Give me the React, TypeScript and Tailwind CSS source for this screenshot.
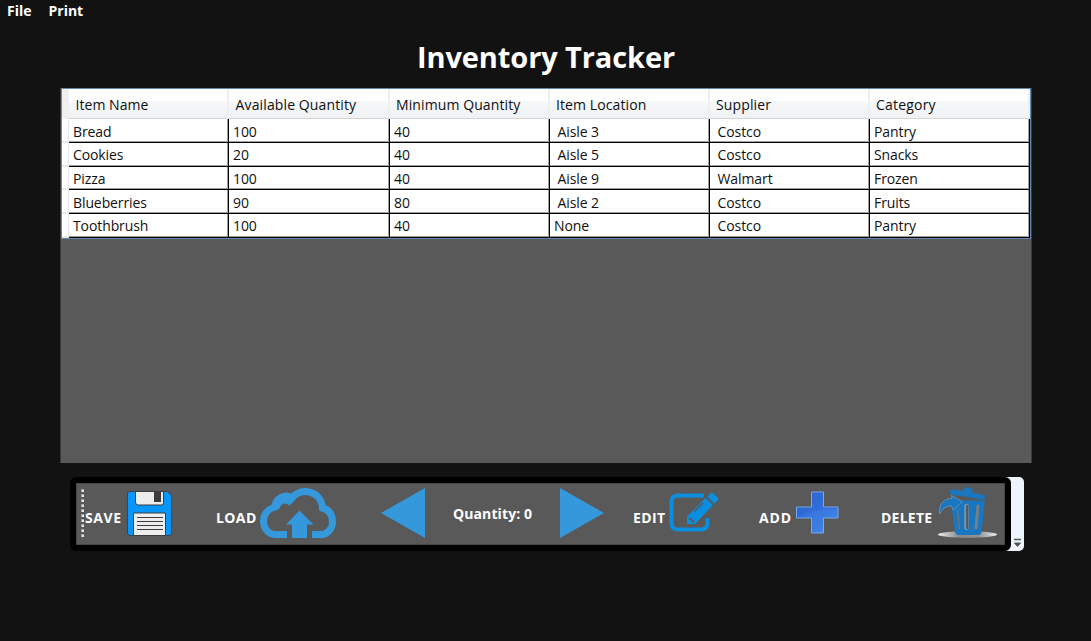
import type { ReactNode } from "react";

const columns = [
  { name: "Item Name", head: "tracking-[0.05px] ml-[0.5px]" },
  { name: "Available Quantity", head: "tracking-[0.12px] ml-[0.6px]" },
  { name: "Minimum Quantity", head: "tracking-[0.1px]" },
  { name: "Item Location", head: "tracking-[0.1px]" },
  { name: "Supplier", head: "tracking-[0.13px]" },
  { name: "Category", head: "tracking-[0.2px]" },
];

const rows = [
  { height: "h-6", text: "mt-[2px]", cells: ["Bread", "100", "40", " Aisle 3", " Costco", "Pantry"] },
  { height: "h-6", text: "", cells: ["Cookies", "20", "40", " Aisle 5", " Costco", "Snacks"] },
  { height: "h-[23px]", text: "mt-[2px]", cells: ["Pizza", "100", "40", " Aisle 9", " Walmart", "Frozen"] },
  { height: "h-6", text: "mt-[2px]", cells: ["Blueberries", "90", "80", " Aisle 2", " Costco", "Fruits"] },
  { height: "h-6", text: "", cells: ["Toothbrush", "100", "40", "None", " Costco", "Pantry"] },
];

const gridColumns = "grid grid-cols-[7px_160px_161px_160px_160px_160px_160px]";

function InventoryTable() {
  return (
    <section className="ml-[60px] h-[375px] w-[972px] border-x border-[#3a3a3a] bg-[#595959] text-[14px] text-[#101010]">
      <div className="h-[151px] w-[970px] border border-[#6488b0] bg-white">
        <div className={`${gridColumns} h-[30px]`}>
          <div className="bg-[#f0f0f0]" />
          {columns.map((c) => (
            <div
              key={c.name}
              className="flex items-center border-r-2 border-b border-r-[#edeff0] border-b-[#d5d5d5] bg-[linear-gradient(to_bottom,#ffffff_0%,#ffffff_40%,#f7f8fa_41%,#f0f1f3_100%)] pl-[6px]"
            >
              <span className={`${c.head} mt-[2px] leading-5 whitespace-pre`}>{c.name}</span>
            </div>
          ))}
        </div>
        {rows.map((r) => (
          <div key={r.cells[0]} className={`${gridColumns} ${r.height}`}>
            <div className="border-b-2 border-r border-[#e8e8ee] bg-white" />
            {r.cells.map((cell, i) => (
              <div
                key={i}
                className="flex items-center border-r border-b border-black pl-1 shadow-[inset_-1px_-1px_0_#a0a0a0]"
              >
                <span className={`${r.text} leading-5 tracking-[-0.1px] whitespace-pre`}>{cell}</span>
              </div>
            ))}
          </div>
        ))}
      </div>
    </section>
  );
}

function Tool({ label, className, children }: { label: string; className: string; children: ReactNode }) {
  return (
    <button className={`${className} flex shrink-0 items-start text-[14px] font-bold text-white`}>
      <span className="mt-[25px] shrink-0 leading-5 whitespace-nowrap">{label}</span>
      {children}
    </button>
  );
}

function SaveIcon() {
  return (
    <svg width="46" height="48" viewBox="0 0 46 48" className="absolute top-[7px] left-[42px]">
      <path d="M2.500 1.500H40.500L44.500 5.500V43Q44.500 45.500 42 45.500H3Q0.500 45.500 0.500 43V4Q0.500 1.500 2.500 1.500Z" fill="#0796fc" stroke="#3b444c" />
      <path d="M8.500 1.500H36.500V13Q36.500 15 34.500 15H11Q8.500 15 8.500 12Z" fill="#ededed" stroke="#3c3c3c" />
      <path d="M27 2H34V12H27Z" fill="#3c3c3c" />
      <path d="M6.500 23H38.500V45.500H6.500Z" fill="#ededed" stroke="#3c3c3c" />
      <path d="M10 27.500H36M10 31.500H36M10 35.500H36M10 39.500H36" stroke="#3c3c3c" />
    </svg>
  );
}

function CloudIcon() {
  return (
    <svg width="78" height="52" viewBox="0 0 78 52" className="absolute top-[5px] left-[44px]">
      <path
        d="M17 46.800C7 46.800 3.500 39 3.500 33C3.500 26 8 21 15 19C15 11 25 5 32 10C40 -1 61 2 62.500 20C70 22 72.500 27 72.500 34C72.500 41 67 46.800 60 46.800"
        fill="none"
        stroke="#3498db"
        strokeWidth="7"
      />
      <path d="M16.500 46.500H27M52 46.500H61" stroke="#3498db" strokeWidth="7" />
      <path d="M17 20Q19 13 25 13Q29 13 31 16" fill="none" stroke="#3498db" strokeWidth="5" />
      <path d="M39.500 22.500L53.500 36.500H47V50H32V36.500H26Z" fill="#3498db" />
    </svg>
  );
}

function EditIcon() {
  return (
    <svg width="50" height="42" viewBox="0 0 50 42" className="absolute top-[9px] left-[36px]">
      <path d="M34.500 4L33 3.500H9Q2.500 3.500 2.500 10V31Q2.500 37.500 9 37.500H32Q38.500 37.500 38.500 31V26" fill="none" stroke="#098ee0" strokeWidth="4" />
      <path d="M18 24.500L36.500 6L44 13L26 32H18Z" fill="#098ee0" />
      <path d="M38 5L42 1Q43 0 45 2L49 6Q50 8 48 9L45 12Z" fill="#098ee0" />
      <path d="M25.500 19.500L34 11M37 4.500L45.500 13" stroke="#595959" strokeWidth="1.500" />
      <path d="M20.500 25L25.500 29.500L24 31L20 27Z" fill="#595959" />
    </svg>
  );
}

function PlusIcon() {
  return (
    <svg width="44" height="44" viewBox="0 0 44 44" className="absolute top-[8px] left-[36px]">
      <defs>
        <linearGradient id="plus" x1="0" y1="0" x2="1" y2="1">
          <stop offset="0" stopColor="#2864d2" />
          <stop offset=".5" stopColor="#3b77df" />
          <stop offset="1" stopColor="#3f8ae9" />
        </linearGradient>
      </defs>
      <path d="M16.500 1H28.500V16H43V27H28.500V42H16.500V27H1.500V16H16.500Z" fill="url(#plus)" stroke="#78a9eb" />
      <path d="M2 26.500Q18 17 43 18V16.500H28V1.500H17V16.500H2Z" fill="#245fce" opacity=".35" />
    </svg>
  );
}

function TrashIcon() {
  return (
    <svg width="62" height="52" viewBox="-1 0 62 52" className="absolute top-[4px] left-[57px]">
      <defs>
        <linearGradient id="ground" x1="0" y1="0" x2="1" y2="0">
          <stop offset="0" stopColor="#eeeeee" />
          <stop offset=".35" stopColor="#8a8a8a" />
          <stop offset=".7" stopColor="#939393" />
          <stop offset="1" stopColor="#eeeeee" />
        </linearGradient>
      </defs>
      <ellipse cx="28.500" cy="47.500" rx="29.500" ry="3.300" fill="url(#ground)" />
      <path d="M23.500 13.500H45.500V17.500L42.500 45Q42 48 39 48H19.500Q16.500 48 16 45L13 22.500L23 15Z" fill="#1976bf" />
      <path d="M18.500 23L20.500 42" stroke="#66737d" strokeWidth="1.500" strokeLinecap="round" />
      <path d="M27.500 19V41" stroke="#9aa5ad" strokeWidth="4" strokeLinecap="round" />
      <path d="M28 19V41" stroke="#595959" strokeWidth="2.500" strokeLinecap="round" />
      <path d="M39 19L37 41" stroke="#747f88" strokeWidth="3" strokeLinecap="round" />
      <path d="M11.500 2.500L24.500 4V2.500Q29 -1 33 2V5.500L45.500 8.500V12.500L11 7Z" fill="#1976bf" stroke="#1976bf" strokeWidth=".6" />
      <path d="M0.500 27C-1 17 6 11 13 11.500L12.500 8.500L23.500 14.500L14 23L12.500 19Q5 18.500 0.500 27Z" fill="#1976bf" stroke="#8cb4d6" strokeWidth=".5" />
    </svg>
  );
}

function Toolbar() {
  return (
    <section className="mt-[14px] ml-[70px] flex h-[74px] w-[954px] rounded-[5px] bg-[linear-gradient(to_right,#121212_50%,#eef4fd_50%)]">
      <div className="flex h-[74px] w-[941px] shrink-0 rounded-[6px] border-[6px] border-black bg-[#595959] shadow-[inset_0_0_0_1px_#464646]">
        <svg width="5" height="52" viewBox="0 0 5 52" className="mt-[5px] ml-1 shrink-0">
          {Array.from({ length: 10 }, (_, i) => (
            <g key={i}>
              <path d={`M1 ${1 + i * 5}h3v3h-3z`} fill="#a8a8a8" />
              <path d={`M2 ${2 + i * 5}h2v2h-2z`} fill="#e5e5e5" />
            </g>
          ))}
        </svg>
        <Tool label="SAVE" className="relative w-[131px] tracking-[0.6px]">
          <SaveIcon />
        </Tool>
        <Tool label="LOAD" className="relative w-[165px] tracking-[0.4px]">
          <CloudIcon />
        </Tool>
        <svg width="44" height="50" viewBox="0 0 44 50" className="mt-[5px] shrink-0">
          <path d="M0 25L44 0V50Z" fill="#3498db" />
        </svg>
        <span className="mt-[21px] ml-[28px] w-[107px] shrink-0 text-[14px] leading-5 font-bold tracking-[0.1px] whitespace-nowrap text-white">
          Quantity: 0
        </span>
        <svg width="44" height="50" viewBox="0 0 44 50" className="mt-[5px] shrink-0">
          <path d="M0 0L44 25L0 50Z" fill="#3498db" />
        </svg>
        <Tool label="EDIT" className="relative ml-[29px] w-[126px] tracking-[0.4px]">
          <EditIcon />
        </Tool>
        <Tool label="ADD" className="relative w-[122px] tracking-[0.9px]">
          <PlusIcon />
        </Tool>
        <Tool label="DELETE" className="relative w-[120px] tracking-[0.25px]">
          <TrashIcon />
        </Tool>
      </div>
      <svg width="9" height="10" viewBox="0 0 9 10" className="mt-[61px] ml-[2px]">
        <path d="M1 1.500H8" stroke="#555555" strokeWidth="1.500" />
        <path d="M1.500 5L4.500 8.500L7.500 5Z" stroke="#555555" fill="#555555" />
      </svg>
    </section>
  );
}

export default function App() {
  return (
    <main className="h-[641px] w-[1091px] overflow-hidden bg-[#121212] font-['Open_Sans','Noto_Sans',sans-serif]">
      <nav className="flex h-[22px] gap-[17px] pl-[7px] text-[14px] leading-[22px] font-bold text-white">
        <span>File</span>
        <span>Print</span>
      </nav>
      <h1 className="flex h-[66px] items-center justify-center pt-[4px] pl-px text-[29px] font-bold tracking-[-0.1px] whitespace-nowrap text-white">
        Inventory Tracker
      </h1>
      <InventoryTable />
      <Toolbar />
    </main>
  );
}
